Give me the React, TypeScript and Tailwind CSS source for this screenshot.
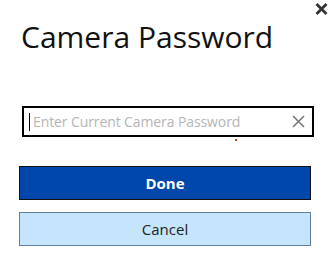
import React from "react";

export default function App() {
  return (
    <div
      className="relative w-[336px] h-[266px] bg-white overflow-hidden"
      style={{ fontFamily: '"Open Sans", "Noto Sans", sans-serif' }}
    >
      <button className="absolute right-[8px] top-[2px] w-[14px] h-[14px] flex items-center justify-center">
        <svg width="13" height="12" viewBox="0 0 13 12">
          <path d="M1.5 1 L11.5 11 M11.5 1 L1.5 11" stroke="#333" strokeWidth="2.8" strokeLinecap="butt" />
        </svg>
      </button>
      <div className="flex flex-col pl-[19px] pr-[25px]">
        <h1 className="mt-[17px] ml-[2px] text-[30px] leading-[40px] text-[#111] font-normal">Camera Password</h1>
        <div className="mt-[49px] ml-[3px] mr-[-3px] h-[31px] border-2 border-black flex items-center relative">
          <div className="ml-[5px] w-[1px] h-[18px] bg-black" />
          <span className="ml-[3px] text-[14px] tracking-[-0.1px] text-[#b5b5b5] flex-1">Enter Current Camera Password</span>
          <svg className="mr-[7px]" width="13" height="13" viewBox="0 0 13 13">
            <path d="M1 1 L12 12 M12 1 L1 12" stroke="#777" strokeWidth="1.6" />
          </svg>
          <div className="absolute left-[211px] top-[31px] w-[2px] h-[2px] bg-[#d33]" />
        </div>
        <button className="mt-[29px] h-[34px] bg-[#0047ab] border border-[#111] text-white text-[15px] font-bold flex items-center justify-center">
          Done
        </button>
        <button className="mt-[12px] h-[34px] bg-[#c5e5fc] border border-[#5f7f9c] text-[#222] text-[15px] flex items-center justify-center">
          Cancel
        </button>
      </div>
    </div>
  );
}
